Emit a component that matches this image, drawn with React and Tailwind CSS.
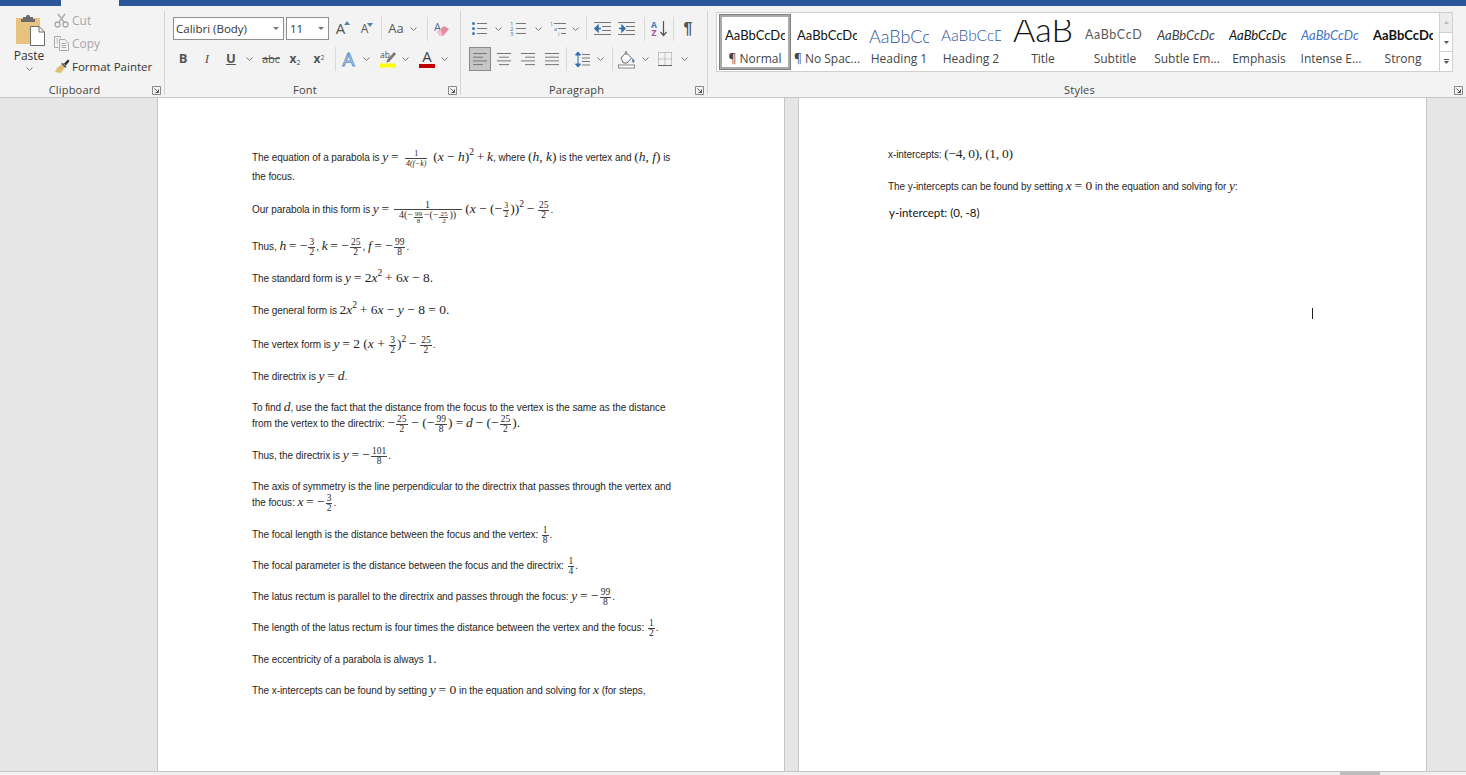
import { Fragment } from 'react';

const UI = "font-['Open_Sans','Noto_Sans',sans-serif]";

const Chev = ({ className = '' }) => (
    <svg width="7" height="4" viewBox="0 0 7 4" className={className}>
        <path d="M0.5 0.5 L3.5 3.5 L6.5 0.5" fill="none" stroke="#777" strokeWidth="1" />
    </svg>
);

const Launcher = () => (
    <div className="w-[15px] flex justify-center">
        <svg width="9" height="9" viewBox="0 0 9 9">
            <path d="M0.5 8.5V0.5H8.5V8.5Z" fill="none" stroke="#888" />
            <path d="M2.5 2.5L6.5 6.5M6.5 3.5V6.5H3.5" fill="none" stroke="#555" />
        </svg>
    </div>
);

const Sep = ({ className = '' }) => <div className={`w-px h-[24px] bg-[#d8d8d8] ${className}`} />;

const Btn = ({ w = 'w-[24px]', className = '', children }) => (
    <div className={`${w} h-[24px] flex items-center justify-center shrink-0 ${className}`}>{children}</div>
);

const ChevBtn = ({ className = '' }) => <Btn w="w-[12px]" className={className}><Chev /></Btn>;

const Group = ({ label, className, children }) => (
    <div className={`flex flex-col border-r border-[#d4d4d4] mb-[2px] mt-[5px] ${className}`}>
        <div className="flex-1 min-h-0">{children}</div>
        <div className="flex items-center h-[14px] mb-[-2px]">
            <div className={`flex-1 text-center text-[11px] leading-[14px] text-[#444] tracking-[0.2px] ${UI}`}>{label}</div>
            <Launcher />
        </div>
    </div>
);

/* ---- ribbon icons ---- */
const PasteIcon = () => (
    <svg width="30" height="32" viewBox="0 0 30 32">
        <rect x="0" y="4" width="24" height="26" fill="#e8c27f" />
        <path d="M7 5V3H10C10 0 14 0 14 3H17V5H19V8H5V5Z" fill="#6b6b6b" />
        <path d="M14.5 12.5H23L28.5 18V31.5H14.5Z" fill="#fff" stroke="#6b6b6b" />
        <path d="M23 12.5V18H28.5" fill="none" stroke="#6b6b6b" />
    </svg>
);

const CutIcon = () => (
    <svg width="15" height="15" viewBox="0 0 15 15" fill="none" stroke="#a8a8a8" strokeWidth="1.3">
        <circle cx="3.5" cy="11.5" r="2.5" />
        <circle cx="11.5" cy="11.5" r="2.5" />
        <path d="M4.8 9.4L11 1M10.2 9.4L4 1" />
    </svg>
);

const CopyIcon = () => (
    <svg width="15" height="15" viewBox="0 0 15 15" fill="none" stroke="#aaa">
        <path d="M0.5 0.5H6.5V2M0.5 0.5V11.5H4.5" />
        <path d="M5.5 3.5H11L14.5 7V14.5H5.5Z" fill="#f3f3f3" />
        <path d="M7.5 7.5H12M7.5 9.5H12M7.5 11.5H12M2.5 3H4M2.5 5H4M2.5 7H4" />
    </svg>
);

const PainterIcon = () => (
    <svg width="16" height="15" viewBox="0 0 16 15">
        <path d="M8 5L11 8L7 14L1 13L3 9Z" fill="#e2bd76" />
        <path d="M7 4.5L11.5 9L12.5 7.5L9 4Z" fill="#555" />
        <path d="M10 4.5L14 0.5L15.5 2L12 6.5Z" fill="#333" />
    </svg>
);

const GrowIcon = ({ size, up }) => (
    <div className="flex items-start">
        <span className={`${size} leading-none text-[#555] ${UI}`}>A</span>
        <svg width="6" height="4" viewBox="0 0 6 4" className="-ml-px">
            <path d={up ? 'M0 4L3 0L6 4Z' : 'M0 0L6 0L3 4Z'} fill="#5b7fa8" />
        </svg>
    </div>
);

const ClearIcon = () => (
    <svg width="16" height="16" viewBox="0 0 16 16">
        <text x="0" y="10" fontSize="11" fill="#4a6f9c" fontFamily="Open Sans">A</text>
        <path d="M3 11L10 5L15 8L9 15H6Z" fill="#e58a9f" />
        <path d="M3 11L6 15H9L6.5 8.5Z" fill="#f3c3cf" />
    </svg>
);

const TextEffectIcon = () => (
    <svg width="18" height="18" viewBox="0 0 18 18">
        <text x="1.5" y="15.5" fontSize="19" fill="#e3edf7" stroke="#5b8fc7" strokeWidth="0.9" fontFamily="Open Sans">A</text>
    </svg>
);

const HighlightIcon = () => (
    <svg width="17" height="18" viewBox="0 0 17 18">
        <text x="0" y="8" fontSize="8.5" fill="#555" fontFamily="Open Sans">ab</text>
        <path d="M7 10L14 2L16 4L9 12L6.5 12.5Z" fill="#777" />
        <rect x="0" y="13.5" width="16" height="4" fill="#ffff00" />
    </svg>
);

const FontColorIcon = () => (
    <div className="flex flex-col items-center w-[16px]">
        <span className={`text-[15px] leading-[13px] text-[#444] ${UI}`}>A</span>
        <div className="w-[16px] h-[4px] bg-[#c00000] mt-px" />
    </div>
);

const ParaLines = ({ rows }) => (
    <svg width="16" height="14" viewBox="0 0 16 14" stroke="#777" fill="none">
        {rows.map(([x1, x2], i) => (
            <path key={i} d={`M${x1} ${1.5 + i * 3.7}H${x2}`} />
        ))}
    </svg>
);

const BulletsIcon = () => (
    <svg width="16" height="15" viewBox="0 0 16 15">
        {[2, 7, 12].map(y => (
            <Fragment key={y}>
                <circle cx="1.5" cy={y + 0.5} r="1.5" fill="#3f78b5" />
                <path d={`M5 ${y + 0.5}H15`} stroke="#777" />
            </Fragment>
        ))}
    </svg>
);

const NumberingIcon = () => (
    <svg width="16" height="15" viewBox="0 0 16 15">
        {[2, 7, 12].map((y, i) => (
            <Fragment key={y}>
                <text x="0" y={y + 2.5} fontSize="6" fill="#3f78b5" fontFamily="Open Sans">{i + 1}</text>
                <path d={`M6 ${y + 0.5}H16`} stroke="#777" />
            </Fragment>
        ))}
    </svg>
);

const MultilevelIcon = () => (
    <svg width="17" height="15" viewBox="0 0 17 15">
        <text x="0" y="4.5" fontSize="5.5" fill="#3f78b5" fontFamily="Open Sans">1</text>
        <path d="M4 2.5H16" stroke="#777" />
        <text x="4" y="9.5" fontSize="5.5" fill="#3f78b5" fontFamily="Open Sans">a</text>
        <path d="M8 7.5H16" stroke="#777" />
        <text x="8" y="14.5" fontSize="5.5" fill="#3f78b5" fontFamily="Open Sans">i</text>
        <path d="M11 12.5H16" stroke="#777" />
    </svg>
);

const IndentIcon = ({ increase }) => (
    <svg width="17" height="13" viewBox="0 0 17 13">
        <path d={increase ? 'M1 6.5H5M4 3.5L7 6.5L4 9.5Z' : 'M3 6.5H7M4 3.5L1 6.5L4 9.5Z'} stroke="#2f6fb0" fill="#2f6fb0" strokeWidth="1.4" />
        <path d="M0 0.5H17M8 4.5H17M8 8.5H17M0 12.5H17" stroke="#777" />
    </svg>
);

const SortIcon = () => (
    <svg width="17" height="17" viewBox="0 0 17 17">
        <text x="0" y="7.5" fontSize="8.5" fontWeight="700" fill="#3f78b5" fontFamily="Open Sans">A</text>
        <text x="0.5" y="16" fontSize="8.5" fontWeight="700" fill="#a64ca6" fontFamily="Open Sans">Z</text>
        <path d="M12.5 1V15M9.5 12L12.5 15.5L15.5 12" fill="none" stroke="#555" strokeWidth="1.2" />
    </svg>
);

const LineSpacingIcon = () => (
    <svg width="15" height="17" viewBox="0 0 15 17">
        <path d="M3 1.5V15.5M0.5 4L3 1L5.5 4ZM0.5 13L3 16L5.5 13Z" stroke="#2f6fb0" fill="#2f6fb0" />
        <path d="M7 3.5H15M7 7H15M7 10.5H15M7 14H15" stroke="#777" />
    </svg>
);

const ShadingIcon = () => (
    <svg width="18" height="19" viewBox="0 0 18 19">
        <path d="M3 8L8 2.5L13.5 8L9 13H5.5Z" fill="#fff" stroke="#666" />
        <path d="M14.5 8C16.5 10.5 17 11.5 16 12.5C15 13.5 13.5 12 14.5 8Z" fill="#3f78b5" />
        <path d="M8 1V5" stroke="#666" />
        <rect x="0.5" y="15" width="16" height="3" fill="#fff" stroke="#888" />
    </svg>
);

const BordersIcon = () => (
    <svg width="14" height="14" viewBox="0 0 14 14" fill="none" stroke="#999" strokeDasharray="1 1">
        <path d="M0.5 0.5H13.5M0.5 7H13.5M0.5 0.5V13.5M7 0.5V13.5M13.5 0.5V13.5" />
        <path d="M0 13.5H14" stroke="#666" strokeDasharray="none" />
    </svg>
);

const STYLES = [
    { name: '¶ Normal', cls: "text-[13px] text-[#111] font-['Lato']", sample: 'AaBbCcDc', selected: true },
    { name: '¶ No Spac...', cls: "text-[13px] text-[#111] font-['Lato']", sample: 'AaBbCcDc' },
    { name: 'Heading 1', cls: "text-[18px] font-light text-[#2f5496] font-['Lato']", sample: 'AaBbCc' },
    { name: 'Heading 2', cls: "text-[15.5px] font-light text-[#2f5496] font-['Lato']", sample: 'AaBbCcD' },
    { name: 'Title', cls: "text-[34px] -mt-[14px] font-light text-[#111] font-['Lato']", sample: 'AaB' },
    { name: 'Subtitle', cls: "text-[12.5px] tracking-[0.6px] text-[#5a5a5a] font-['Lato']", sample: 'AaBbCcD' },
    { name: 'Subtle Em...', cls: "text-[13px] italic text-[#404040] font-['Lato']", sample: 'AaBbCcDc' },
    { name: 'Emphasis', cls: "text-[13px] italic text-[#111] font-['Lato']", sample: 'AaBbCcDc' },
    { name: 'Intense E...', cls: "text-[13px] italic text-[#4472c4] font-['Lato']", sample: 'AaBbCcDc' },
    { name: 'Strong', cls: "text-[13px] font-bold text-[#111] font-['Lato']", sample: 'AaBbCcDc' },
];

function Ribbon() {
    return (
        <div className="flex h-[92px] bg-[#f3f3f3] border-b border-[#c6c6c6] shrink-0">
            <Group label="Clipboard" className="w-[165px]">
                <div className="flex">
                    <div className="w-[53px] pl-[16px] pt-[3px] flex flex-col">
                        <PasteIcon />
                        <div className={`-ml-[16px] w-[58px] text-center text-[12px] leading-[14px] text-[#333] mt-[3px] ${UI}`}>Paste</div>
                        <div className="-ml-[16px] w-[58px] flex justify-center mt-[4px]"><Chev /></div>
                    </div>
                    <div className={`flex flex-col text-[12px] ${UI}`}>
                        <div className="flex items-center h-[23px] mt-[-2px] gap-[3px] text-[#a8a8a8] pl-px"><CutIcon /><span>Cut</span></div>
                        <div className="flex items-center h-[23px] gap-[3px] text-[#a8a8a8] pl-px"><CopyIcon /><span>Copy</span></div>
                        <div className="flex items-center h-[23px] gap-[2px] text-[#333] pl-px whitespace-nowrap"><PainterIcon /><span className="text-[11.5px]">Format Painter</span></div>
                    </div>
                </div>
            </Group>

            <Group label="Font" className="w-[296px]">
                <div className="pl-[8px] pt-[6px]">
                    <div className="flex items-center h-[23px]">
                        <div className={`w-[111px] h-[23px] bg-white border border-[#8f8f8f] flex items-center justify-between pl-[2px] pr-[4px] text-[11.5px] text-[#333] ${UI}`}>
                            <span>Calibri (Body)</span>
                            <svg width="6" height="3"><path d="M0 0H6L3 3Z" fill="#777" /></svg>
                        </div>
                        <div className={`w-[43px] h-[23px] ml-[2px] bg-white border border-[#8f8f8f] flex items-center justify-between pl-[3px] pr-[4px] text-[11.5px] text-[#333] ${UI}`}>
                            <span>11</span>
                            <svg width="6" height="3"><path d="M0 0H6L3 3Z" fill="#777" /></svg>
                        </div>
                        <Btn className="ml-[2px]"><GrowIcon size="text-[15px]" up /></Btn>
                        <Btn><GrowIcon size="text-[12px]" /></Btn>
                        <Sep className="ml-[2px]" />
                        <Btn w="w-[22px]" className="ml-[3px]"><span className={`text-[13px] text-[#555] ${UI}`}>Aa</span></Btn>
                        <ChevBtn />
                        <Sep className="ml-[8px]" />
                        <Btn className="ml-[2px]"><ClearIcon /></Btn>
                    </div>
                    <div className="flex items-center h-[24px] mt-[7px] -ml-[2px]">
                        <Btn><span className={`text-[13px] font-bold text-[#555] ${UI}`}>B</span></Btn>
                        <Btn><span className="text-[13px] italic text-[#555] font-['Liberation_Serif']">I</span></Btn>
                        <Btn><span className={`text-[13px] font-bold underline text-[#555] ${UI}`}>U</span></Btn>
                        <ChevBtn />
                        <Btn className="ml-[4px]"><span className={`text-[11px] line-through text-[#555] ${UI}`}>abc</span></Btn>
                        <Btn><span className={`text-[12px] font-bold text-[#555] ${UI}`}>x<sub className="text-[7px] font-normal">2</sub></span></Btn>
                        <Btn><span className={`text-[12px] font-bold text-[#555] ${UI}`}>x<sup className="text-[7px] font-normal">2</sup></span></Btn>
                        <Sep className="ml-[4px]" />
                        <Btn w="w-[24px]" className="ml-[2px]"><TextEffectIcon /></Btn>
                        <ChevBtn className="-ml-[2px]" />
                        <Btn w="w-[22px]" className="ml-[5px]"><HighlightIcon /></Btn>
                        <ChevBtn />
                        <Btn w="w-[22px]" className="ml-[5px]"><FontColorIcon /></Btn>
                        <ChevBtn />
                    </div>
                </div>
            </Group>

            <Group label="Paragraph" className="w-[247px]">
                <div className="pl-[7px] pt-[6px]">
                    <div className="flex items-center h-[23px]">
                        <Btn><BulletsIcon /></Btn>
                        <ChevBtn />
                        <Btn className="ml-[2px]"><NumberingIcon /></Btn>
                        <ChevBtn className="ml-[2px]" />
                        <Btn w="w-[22px]" className="ml-[3px]"><MultilevelIcon /></Btn>
                        <ChevBtn />
                        <Sep className="ml-[5px]" />
                        <Btn className="ml-[3px]"><IndentIcon /></Btn>
                        <Btn><IndentIcon increase /></Btn>
                        <Sep className="ml-[6px]" />
                        <Btn className="ml-[2px]"><SortIcon /></Btn>
                        <Sep className="ml-[2px]" />
                        <Btn className="ml-[2px]"><span className="text-[16px] font-bold text-[#555] font-['Liberation_Sans']">¶</span></Btn>
                    </div>
                    <div className="flex items-center h-[24px] mt-[7px] ml-[1px]">
                        <div className="w-[22px] h-[24px] bg-[#c6c6c6] border border-[#8a8a8a] flex items-center justify-center shrink-0">
                            <ParaLines rows={[[1, 15], [1, 11], [1, 15], [1, 11]]} />
                        </div>
                        <Btn className="ml-[1px]"><ParaLines rows={[[1, 15], [3, 13], [1, 15], [3, 13]]} /></Btn>
                        <Btn><ParaLines rows={[[1, 15], [5, 15], [1, 15], [5, 15]]} /></Btn>
                        <Btn><ParaLines rows={[[1, 15], [1, 15], [1, 15], [1, 15]]} /></Btn>
                        <Sep className="ml-[2px]" />
                        <Btn className="ml-[3px]"><LineSpacingIcon /></Btn>
                        <ChevBtn />
                        <Sep className="ml-[6px]" />
                        <Btn className="ml-[2px]"><ShadingIcon /></Btn>
                        <ChevBtn />
                        <Btn className="ml-[2px]"><BordersIcon /></Btn>
                        <ChevBtn className="ml-[1px]" />
                    </div>
                </div>
            </Group>

            <Group label="Styles" className="flex-1 border-r-0">
                <div className="flex pl-[8px] pt-[1px]">
                    <div className="flex w-[724px] h-[60px] bg-white border border-[#d0d0d0] pl-[2px] pt-px">
                        {STYLES.map(s => (
                            <div
                                key={s.name}
                                className={`w-[72px] h-[56px] shrink-0 flex flex-col items-center ${s.selected ? 'border-[3px] border-[#a9a9a9] outline outline-1 outline-[#7f7f7f] -outline-offset-1' : 'border-[3px] border-transparent'}`}
                            >
                                <div className="w-[60px] h-[31px] mt-[3px] overflow-hidden flex items-center whitespace-nowrap">
                                    <span className={`leading-none ${s.cls}`}>{s.sample}</span>
                                </div>
                                <div className={`text-[12px] leading-[14px] text-[#444] mt-[1px] whitespace-nowrap ${UI}`}>{s.name}</div>
                            </div>
                        ))}
                    </div>
                    <div className="w-[13px] h-[60px] flex flex-col bg-white border border-l-0 border-[#d0d0d0]">
                        <div className="h-[20px] bg-[#ececec] border-b border-[#d0d0d0] flex items-center justify-center">
                            <svg width="5" height="3"><path d="M0 3L2.5 0L5 3Z" fill="#bbb" /></svg>
                        </div>
                        <div className="h-[19px] border-b border-[#d0d0d0] flex items-center justify-center">
                            <svg width="5" height="3"><path d="M0 0L2.5 3L5 0Z" fill="#555" /></svg>
                        </div>
                        <div className="flex-1 flex flex-col items-center justify-center gap-px">
                            <div className="w-[5px] h-px bg-[#555]" />
                            <svg width="5" height="3"><path d="M0 0L2.5 3L5 0Z" fill="#555" /></svg>
                        </div>
                    </div>
                </div>
            </Group>
        </div>
    );
}

/* ---- document content ---- */
const Line = ({ className = '', children }) => (
    <div className={`h-[16px] leading-[16px] whitespace-pre ${className}`}>{children}</div>
);

const V = ({ children }) => <span className="font-['Liberation_Serif'] italic text-[13.5px] tracking-normal">{children}</span>;
const N = ({ children }) => <span className="font-['Liberation_Serif'] text-[13.5px] tracking-normal">{children}</span>;
const Sup = ({ children }) => <sup className="static font-['Liberation_Serif'] text-[9.5px] align-[6px] leading-none">{children}</sup>;

const Frac = ({ n, d, size = 'text-[9.5px] leading-[9px]', align = 'align-[5px]', className = 'mx-[1px]' }) => (
    <span className={`inline-flex flex-col items-center font-['Liberation_Serif'] tracking-normal ${align} ${size} ${className}`}>
        <span className="border-b border-[#444] px-[1px] w-full text-center">{n}</span>
        <span className="px-[1px]">{d}</span>
    </span>
);

const Mini = ({ n, d }) => <Frac n={n} d={d} size="text-[7px] leading-[6px]" align="align-[2px]" className="mx-[1px]" />;

function LeftPage() {
    return (
        <div className="w-[628px] h-full shrink-0 bg-white border-x border-[#c6c6c6] pl-[94px] pt-[50px] font-['Liberation_Sans'] text-[10px] tracking-[-0.07px] text-[#1f1f1f] overflow-hidden">
            <Line>The equation of a parabola is <V>y</V> <N>= </N><Frac n="1" d={<i>4(f−k)</i>} size="text-[8px] leading-[9px]" className="ml-[3px] mr-[3px]" /> <N>(<V>x</V> − <V>h</V>)</N><Sup>2</Sup> <N>+</N> <V>k</V>, where <N>(<V>h</V>, <V>k</V>)</N> is the vertex and <N>(<V>h</V>, <V>f</V>)</N> is</Line>
            <Line className="mt-[5px]">the focus.</Line>
            <Line className="mt-[15px]">Our parabola in this form is <V>y</V> <N>= </N><Frac n="1" d={<>4(−<Mini n="99" d="8" />−(−<Mini n="25" d="2" />))</>} size="text-[10px] leading-[9px]" className="mx-[1px] w-[68px]" /> <N>(<V>x</V> − (−</N><Frac n="3" d="2" size="text-[8px] leading-[8px]" /><N>))</N><Sup>2</Sup> <N>−</N> <Frac n="25" d="2" />.</Line>
            <Line className="mt-[22px]">Thus, <V>h</V> <N>= −</N><Frac n="3" d="2" />, <V>k</V> <N>= −</N><Frac n="25" d="2" />, <V>f</V> <N>= −</N><Frac n="99" d="8" />.</Line>
            <Line className="mt-[15px]">The standard form is <V>y</V> <N>= 2<V>x</V></N><Sup>2</Sup> <N>+ 6<V>x</V> − 8.</N></Line>
            <Line className="mt-[16px]">The general form is <N>2<V>x</V></N><Sup>2</Sup> <N>+ 6<V>x</V> − <V>y</V> − 8 = 0.</N></Line>
            <Line className="mt-[18px]">The vertex form is <V>y</V> <N>= 2 (<V>x</V> + </N><Frac n="3" d="2" /><N>)</N><Sup>2</Sup> <N>−</N> <Frac n="25" d="2" />.</Line>
            <Line className="mt-[17px]">The directrix is <V>y</V> <N>=</N> <V>d</V>.</Line>
            <Line className="mt-[15px]">To find <V>d</V>, use the fact that the distance from the focus to the vertex is the same as the distance</Line>
            <Line>from the vertex to the directrix: <N>−</N><Frac n="25" d="2" /> <N>− (−</N><Frac n="99" d="8" /><N>) =</N> <V>d</V> <N>− (−</N><Frac n="25" d="2" /><N>).</N></Line>
            <Line className="mt-[16px]">Thus, the directrix is <V>y</V> <N>= −</N><Frac n="101" d="8" />.</Line>
            <Line className="mt-[16px]">The axis of symmetry is the line perpendicular to the directrix that passes through the vertex and</Line>
            <Line className="-mt-px">the focus: <V>x</V> <N>= −</N><Frac n="3" d="2" />.</Line>
            <Line className="mt-[16px]">The focal length is the distance between the focus and the vertex: <Frac n="1" d="8" />.</Line>
            <Line className="mt-[15px]">The focal parameter is the distance between the focus and the directrix: <Frac n="1" d="4" />.</Line>
            <Line className="mt-[15px]">The latus rectum is parallel to the directrix and passes through the focus: <V>y</V> <N>= −</N><Frac n="99" d="8" />.</Line>
            <Line className="mt-[15px]">The length of the latus rectum is four times the distance between the vertex and the focus: <Frac n="1" d="2" />.</Line>
            <Line className="mt-[16px]">The eccentricity of a parabola is always <N>1.</N></Line>
            <Line className="mt-[15px]">The x-intercepts can be found by setting <V>y</V> <N>= 0</N> in the equation and solving for <V>x</V> (for steps,</Line>
        </div>
    );
}

function RightPage() {
    return (
        <div className="relative w-[629px] h-full shrink-0 bg-white border-x border-[#c6c6c6] pl-[89px] pt-[48px] font-['Liberation_Sans'] text-[10px] tracking-[-0.07px] text-[#1f1f1f]">
            <Line>x-intercepts: <span className="font-['Liberation_Serif'] text-[13.5px] tracking-[-0.3px]">(−4, 0), (1, 0)</span></Line>
            <Line className="mt-[16px]">The y-intercepts can be found by setting <V>x</V> <N>= 0</N> in the equation and solving for <V>y</V>:</Line>
            <Line className="mt-[11px] pl-[1px] font-['Lato'] text-[11.5px] tracking-normal text-[#111]">y-intercept: (0, -8)</Line>
            {/* mouse cursor */}
            <div className="absolute left-[513px] top-[210px] w-px h-[11px] bg-[#222]" />
        </div>
    );
}

export default function App() {
    return (
        <div className="w-[1466px] h-[775px] flex flex-col overflow-hidden bg-[#e6e6e6]">
            <div className="flex h-[6px] shrink-0 bg-[#2b579a]">
                <div className="w-[58px] h-full ml-[61px] bg-[#f3f3f3]" />
            </div>
            <Ribbon />
            <div className="flex-1 min-h-0 flex pl-[157px] gap-[13px] overflow-hidden">
                <LeftPage />
                <RightPage />
            </div>
            <div className="h-[4px] shrink-0 bg-[#f1f1f1] border-t border-[#c6c6c6] flex justify-end pr-[86px]">
                <div className="w-[40px] h-full bg-[#bdbdbd]" />
            </div>
        </div>
    );
}
